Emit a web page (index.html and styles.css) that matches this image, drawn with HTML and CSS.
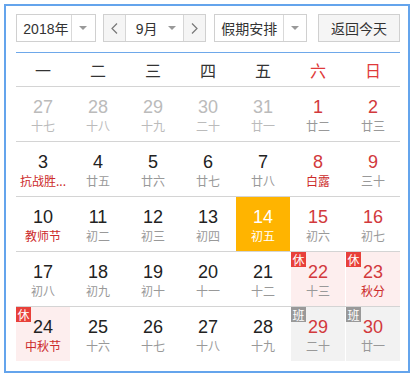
FILE: index.html
```html
<!DOCTYPE html>
<html lang="zh-CN">
<head>
<meta charset="utf-8">
<title>万年历</title>
<link rel="stylesheet" href="styles.css">
</head>
<body>
<div class="frame">
  <div class="toolbar">
    <div class="select sel-year">
      <span class="sel-text">2018年</span>
      <span class="sel-drop"><i class="tri"></i></span>
    </div>
    <div class="month-group">
      <span class="arrow"><svg width="7" height="11" viewBox="0 0 7 11"><polyline points="6,0.5 1,5.5 6,10.5" fill="none" stroke="#777" stroke-width="1.2"/></svg></span>
      <span class="month"><span class="month-text">9月</span><i class="tri"></i></span>
      <span class="arrow arrow-r"><svg width="7" height="11" viewBox="0 0 7 11"><polyline points="1,0.5 6,5.5 1,10.5" fill="none" stroke="#777" stroke-width="1.2"/></svg></span>
    </div>
    <div class="select sel-holiday">
      <span class="sel-text">假期安排</span>
      <span class="sel-drop"><i class="tri"></i></span>
    </div>
    <div class="btn-today">返回今天</div>
  </div>
  <div class="calendar">
    <div class="week">
      <span>一</span><span>二</span><span>三</span><span>四</span><span>五</span><span class="we">六</span><span class="we">日</span>
    </div>
    <div class="row">
      <div class="cell other"><b>27</b><em>十七</em></div>
      <div class="cell other"><b>28</b><em>十八</em></div>
      <div class="cell other"><b>29</b><em>十九</em></div>
      <div class="cell other"><b>30</b><em>二十</em></div>
      <div class="cell other"><b>31</b><em>廿一</em></div>
      <div class="cell weekend"><b>1</b><em>廿二</em></div>
      <div class="cell weekend"><b>2</b><em>廿三</em></div>
    </div>
    <div class="row">
      <div class="cell"><b>3</b><em class="fest">抗战胜...</em></div>
      <div class="cell"><b>4</b><em>廿五</em></div>
      <div class="cell"><b>5</b><em>廿六</em></div>
      <div class="cell"><b>6</b><em>廿七</em></div>
      <div class="cell"><b>7</b><em>廿八</em></div>
      <div class="cell weekend"><b>8</b><em class="fest">白露</em></div>
      <div class="cell weekend"><b>9</b><em>三十</em></div>
    </div>
    <div class="row">
      <div class="cell"><b>10</b><em class="fest">教师节</em></div>
      <div class="cell"><b>11</b><em>初二</em></div>
      <div class="cell"><b>12</b><em>初三</em></div>
      <div class="cell"><b>13</b><em>初四</em></div>
      <div class="cell today"><b>14</b><em>初五</em></div>
      <div class="cell weekend"><b>15</b><em>初六</em></div>
      <div class="cell weekend"><b>16</b><em>初七</em></div>
    </div>
    <div class="row">
      <div class="cell"><b>17</b><em>初八</em></div>
      <div class="cell"><b>18</b><em>初九</em></div>
      <div class="cell"><b>19</b><em>初十</em></div>
      <div class="cell"><b>20</b><em>十一</em></div>
      <div class="cell"><b>21</b><em>十二</em></div>
      <div class="cell weekend rest"><span class="badge">休</span><b>22</b><em>十三</em></div>
      <div class="cell weekend rest"><span class="badge">休</span><b>23</b><em class="fest">秋分</em></div>
    </div>
    <div class="row last">
      <div class="cell rest"><span class="badge">休</span><b>24</b><em class="fest">中秋节</em></div>
      <div class="cell"><b>25</b><em>十六</em></div>
      <div class="cell"><b>26</b><em>十七</em></div>
      <div class="cell"><b>27</b><em>十八</em></div>
      <div class="cell"><b>28</b><em>十九</em></div>
      <div class="cell weekend work"><span class="badge">班</span><b>29</b><em>二十</em></div>
      <div class="cell weekend work"><span class="badge">班</span><b>30</b><em>廿一</em></div>
    </div>
  </div>
</div>
</body>
</html>
```
FILE: styles.css
```css
* { box-sizing: border-box; }
html, body { margin: 0; padding: 0; background: #fff; }
body {
  font-family: "Liberation Sans", "Noto Sans CJK SC", sans-serif;
  color: #333;
}
.frame {
  margin: 4px;
  width: 406px;
  height: 369px;
  border: 2px solid #64a4ec;
  padding: 8px 8px 10px 10px;
}
.toolbar {
  display: flex;
  height: 28px;
  font-size: 14px;
}
.select {
  display: flex;
  height: 28px;
  border: 1px solid #d0d0d0;
  background: #fff;
}
.sel-text {
  flex: 1;
  display: flex;
  align-items: center;
  justify-content: center;
  color: #333;
}
.sel-drop {
  width: 24px;
  border-left: 1px solid #d9d9d9;
  display: flex;
  align-items: center;
  justify-content: center;
}
.tri {
  display: block;
  width: 0;
  height: 0;
  border-left: 4px solid transparent;
  border-right: 4px solid transparent;
  border-top: 4px solid #999;
}
.sel-year { width: 80px; padding-left: 4px; }
.month-group {
  margin-left: 7px;
  width: 104px;
  height: 28px;
  border: 1px solid #d0d0d0;
  display: flex;
}
.arrow {
  width: 22px;
  background: #f5f5f5;
  border-right: 1px solid #d6d6d6;
  display: flex;
  align-items: center;
  justify-content: center;
}
.arrow-r {
  border-right: none;
  border-left: 1px solid #d6d6d6;
}
.month {
  flex: 1;
  display: flex;
  align-items: center;
  padding-left: 10px;
  padding-right: 7px;
  background: #fff;
}
.month-text { flex: 1; }
.sel-holiday { margin-left: 8px; width: 93px; }
.sel-holiday .sel-drop { width: 23px; }
.btn-today {
  margin-left: 11px;
  width: 82px;
  height: 28px;
  border: 1px solid #d0d0d0;
  background: #f5f5f5;
  display: flex;
  align-items: center;
  justify-content: center;
  color: #333;
}
.calendar {
  margin-top: 10px;
  width: 384px;
  border-top: 1px solid #6ea8ea;
}
.week {
  display: grid;
  grid-template-columns: repeat(7, 1fr);
  column-gap: 1px;
  height: 34px;
  border-bottom: 1px solid #d4d4d4;
  font-size: 16px;
  color: #333;
  font-family: "Noto Sans CJK SC", sans-serif;
}
.week span {
  display: flex;
  align-items: center;
  justify-content: center;
}
.week .we { color: #e03a3a; }
.row {
  display: grid;
  grid-template-columns: repeat(7, 1fr);
  column-gap: 1px;
  height: 55px;
  border-bottom: 1px solid #d4d4d4;
}
.row.last { border-bottom: none; height: 54px; }
.cell {
  position: relative;
  display: flex;
  flex-direction: column;
  align-items: center;
  padding: 9px 0 0;
  min-width: 0;
}
.cell b {
  font-weight: normal;
  font-size: 18px;
  line-height: 22px;
  color: #222;
}
.cell em {
  font-style: normal;
  font-size: 12px;
  line-height: 16px;
  color: #999;
  white-space: nowrap;
  font-family: "Noto Sans CJK SC", sans-serif;
}
.cell em.fest { color: #cc2a2a; }
.cell.weekend b { color: #d2393c; }
.cell.other b { color: #bbb; }
.cell.other em { color: #bbb; }
.cell.today { background: #ffb400; }
.cell.today b, .cell.today em { color: #fff; }
.cell.rest { background: #fdeeee; }
.cell.work { background: #f2f2f2; }
.badge {
  position: absolute;
  left: 0;
  top: 0;
  width: 15px;
  height: 15px;
  font-size: 12px;
  line-height: 15px;
  text-align: center;
  color: #fff;
  background: #e8403a;
  font-family: "Noto Sans CJK SC", sans-serif;
}
.work .badge { background: #999; }
```
